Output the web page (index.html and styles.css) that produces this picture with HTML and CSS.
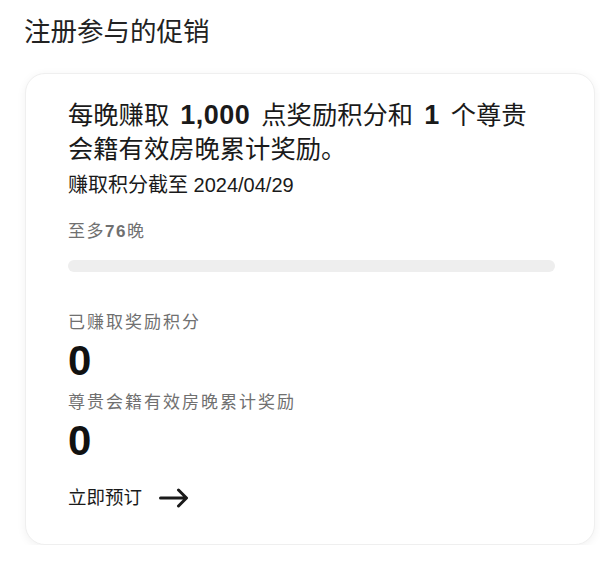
FILE: index.html
```html
<!DOCTYPE html>
<html lang="zh-CN">
<head>
<meta charset="utf-8">
<link rel="stylesheet" href="styles.css">
</head>
<body>
<h1 class="page-title">注册参与的促销</h1>
<div class="card">
  <h2 class="offer">每晚赚取 <span class="num">1,000</span> 点奖励积分和 <span class="num">1</span> 个尊贵会籍有效房晚累计奖励。</h2>
  <p class="deadline">赚取积分截至 2024/04/29</p>
  <p class="limit">至多<span class="limit-num">76</span>晚</p>
  <div class="bar"><div class="bar-fill" style="width:0%"></div></div>
  <div class="stats">
    <div class="stat">
      <p class="stat-label">已赚取奖励积分</p>
      <p class="stat-value">0</p>
    </div>
    <div class="stat">
      <p class="stat-label">尊贵会籍有效房晚累计奖励</p>
      <p class="stat-value">0</p>
    </div>
  </div>
  <a class="book" href="#">立即预订
    <svg class="arrow" width="30" height="20" viewBox="0 0 30 20"><path d="M1.5 10H27M19.5 2L27.5 10L19.5 18" fill="none" stroke="#1a1a1a" stroke-width="3" stroke-linecap="round" stroke-linejoin="round"/></svg>
  </a>
</div>
</body>
</html>
```
FILE: styles.css
```css
* { box-sizing: border-box; }
html, body { margin: 0; padding: 0; background: #ffffff; }
body {
  font-family: "Liberation Sans", "Noto Sans CJK SC", sans-serif;
  color: #1a1a1a;
  width: 600px;
}
p, h1, h2 { margin: 0; }
.page-title {
  font-family: "Noto Sans CJK SC", sans-serif;
  font-weight: 400;
  font-size: 26.5px;
  line-height: 34px;
  padding: 13px 0 0 24px;
  color: #222;
}
.card {
  margin: 26px 0 0 25px;
  width: 570px;
  height: 472px;
  background: #fff;
  border-radius: 20px;
  border: 1px solid #efefef;
  box-shadow: 0 2px 10px rgba(0,0,0,0.06);
  padding: 24px 42px 0 42px;
}
.offer {
  font-weight: 400;
  font-size: 25.3px;
  line-height: 34px;
  color: #1a1a1a;
  width: 470px;
  word-spacing: 4px;
}
.num {
  font-size: 27px;
  line-height: 34px;
  font-weight: 700;
  letter-spacing: 0.5px;
}
.deadline {
  font-size: 20px;
  line-height: 26px;
  margin-top: 6px;
  color: #1a1a1a;
}
.limit {
  font-size: 17px;
  line-height: 22px;
  letter-spacing: 1.5px;
  color: #707070;
  margin-top: 23px;
}
.limit-num { font-weight: 700; }
.bar {
  margin-top: 17px;
  width: 487px;
  height: 12px;
  border-radius: 6px;
  background: #eeeeee;
  overflow: hidden;
}
.bar-fill { height: 100%; background: #1a1a1a; }
.stats {
  margin-top: 39px;
  display: flex;
  flex-direction: column;
  gap: 7px;
}
.stat-label {
  font-size: 17px;
  line-height: 24px;
  letter-spacing: 2px;
  color: #707070;
}
.stat-value {
  font-size: 42px;
  font-weight: 700;
  line-height: 46px;
  margin-top: 3px;
  color: #111;
}
.book {
  display: inline-flex;
  align-items: center;
  gap: 17px;
  margin-top: 21px;
  font-size: 18.5px;
  line-height: 26px;
  color: #1a1a1a;
  text-decoration: none;
}
.arrow { display: block; }
```
